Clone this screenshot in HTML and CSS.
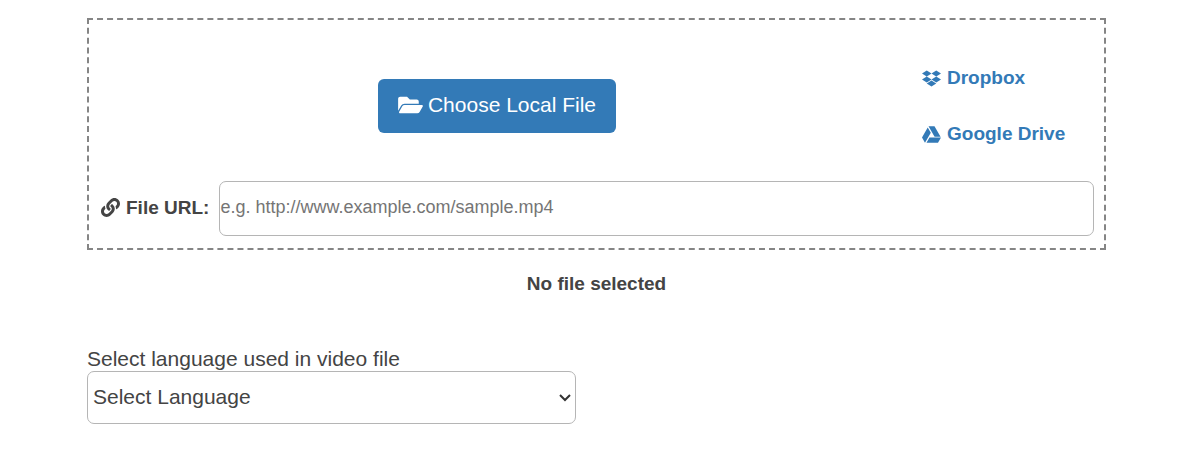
FILE: index.html
```html
<!DOCTYPE html>
<html lang="en">
  <head>
    <meta charset="UTF-8" />
    <meta name="viewport" content="width=device-width, initial-scale=1.0" />
    <title>Upload a video file</title>
    <link rel="stylesheet" href="styles.css">
  </head>

  <body>
    <main class="container">
      <div class="dropzone">
        <div class="sources">
          <button type="button" class="choose">
            <svg class="icon-folder" viewBox="0 0 576 512" aria-hidden="true"><path d="M572.694 292.093L500.27 416.248A63.997 63.997 0 0 1 444.989 448H45.025c-18.523 0-30.064-20.093-20.731-36.093l72.424-124.155A64 64 0 0 1 152 256h399.964c18.523 0 30.064 20.093 20.73 36.093zM152 224h328v-48c0-26.51-21.49-48-48-48H272l-64-64H48C21.49 64 0 85.49 0 112v278.046l69.077-118.418C86.214 242.25 117.989 224 152 224z"/></svg>
            Choose Local File
          </button>
          <div class="cloud">
            <a href="#">
              <svg class="icon" viewBox="0 0 528 512" aria-hidden="true"><path d="M264.4 116.3l-132 84.3 132 84.3-132 84.3L0 284.1l132.3-84.3L0 116.3 132.3 32l132.1 84.3zM131.6 395.7l132-84.3 132 84.3-132 84.3-132-84.3zm132.8-111.6l132-84.3-132-83.6L395.7 32 528 116.3l-132.3 84.3L528 284.8l-132.3 84.3-131.3-85z"/></svg>
              Dropbox
            </a>
            <a href="#">
              <svg class="icon" viewBox="0 0 512 512" aria-hidden="true"><path d="M339 314.9L175.4 32h161.2l163.6 282.9H339zm-137.5 23.6L120.9 480h310.5L512 338.5H201.5zM154.1 67.4L0 338.5 80.6 480 237 208.8 154.1 67.4z"/></svg>
              Google Drive
            </a>
          </div>
        </div>
        <div class="url_row">
          <label for="file_url">
            <svg class="icon" viewBox="0 0 512 512" aria-hidden="true"><path d="M326.612 185.391c59.747 59.809 58.927 155.698.36 214.59-.11.12-.24.25-.36.37l-67.2 67.2c-59.27 59.27-155.699 59.262-214.96 0-59.27-59.26-59.27-155.7 0-214.96l37.106-37.106c9.84-9.84 26.786-3.3 27.294 10.606.648 17.722 3.826 35.527 9.69 52.721 1.986 5.822.567 12.262-3.783 16.612l-13.087 13.087c-28.026 28.026-28.905 73.66-1.155 101.96 28.024 28.579 74.086 28.749 102.325.51l67.2-67.19c28.191-28.191 28.073-73.757 0-101.83-3.701-3.694-7.429-6.564-10.341-8.569a16.037 16.037 0 0 1-6.947-12.606c-.396-10.567 3.348-21.456 11.698-29.806l21.054-21.055c5.521-5.521 14.182-6.199 20.584-1.731a152.482 152.482 0 0 1 20.522 17.197zM467.547 44.449c-59.261-59.262-155.69-59.27-214.96 0l-67.2 67.2c-.12.12-.25.25-.36.37-58.566 58.892-59.387 154.781.36 214.59a152.454 152.454 0 0 0 20.521 17.196c6.402 4.468 15.064 3.789 20.584-1.731l21.054-21.055c8.35-8.35 12.094-19.239 11.698-29.806a16.037 16.037 0 0 0-6.947-12.606c-2.912-2.005-6.64-4.875-10.341-8.569-28.073-28.073-28.191-73.639 0-101.83l67.2-67.19c28.239-28.239 74.3-28.069 102.325.51 27.75 28.3 26.872 73.934-1.155 101.96l-13.087 13.087c-4.35 4.35-5.769 10.79-3.783 16.612 5.864 17.194 9.042 34.999 9.69 52.721.509 13.906 17.454 20.446 27.294 10.606l37.106-37.106c59.271-59.259 59.271-155.699.001-214.959z"/></svg>
            File URL:
          </label>
          <input type="text" id="file_url" name="file_url" placeholder="e.g. http://www.example.com/sample.mp4" />
        </div>
      </div>

      <p class="status">No file selected</p>

      <div class="language">
        <label for="language">Select language used in video file</label>
        <div class="select_wrap">
          <select id="language" name="language">
            <option>Select Language</option>
          </select>
          <svg class="chevron" viewBox="0 0 12 8" aria-hidden="true"><path d="M1 1l5 5 5-5"/></svg>
        </div>
      </div>
    </main>
  </body>
</html>
```
FILE: styles.css
```css
* {
  box-sizing: border-box;
}

body {
  margin: 0;
  background-color: #fff;
  color: #444;
  font-family: "Liberation Sans", Arial, sans-serif;
  font-size: 19px;
  line-height: 24px;
}

.container {
  padding: 18px 94px 24px 87px;
}

.dropzone {
  border: 2px dashed #858585;
  padding: 46px 10px 12px;
}

.sources {
  display: grid;
  grid-template-columns: 4fr 1fr;
  align-items: start;
}

.choose {
  display: flex;
  align-items: center;
  justify-self: center;
  gap: 5px;
  height: 54px;
  margin-top: 13px;
  padding: 0 20px 2px;
  border: 0;
  border-radius: 6px;
  background-color: #337ab7;
  color: #fff;
  font-family: inherit;
  font-size: 21px;
  cursor: pointer;
}

svg {
  fill: currentColor;
}

.icon-folder {
  width: 25px;
  height: 22px;
}

.icon {
  width: 19px;
  height: 19px;
}

.cloud {
  display: flex;
  flex-direction: column;
  gap: 32px;
  padding-left: 27px;
}

.cloud a,
.url_row label {
  display: flex;
  align-items: center;
  gap: 6px;
  font-weight: bold;
  white-space: nowrap;
}

.cloud a {
  color: #337ab7;
  text-decoration: none;
}

.url_row {
  display: flex;
  align-items: center;
  gap: 10px;
  margin-top: 35px;
  padding-left: 2px;
}

.url_row label {
  padding-bottom: 2px;
}

.url_row input {
  flex: 1;
  min-width: 0;
  height: 55px;
  padding: 0 0 2px;
  border: 1px solid #b5b5b5;
  border-radius: 7px;
  color: #444;
  font-family: inherit;
  font-size: 18px;
}

.url_row input::placeholder {
  color: #757575;
}

.status {
  margin: 22px 0 51px;
  font-weight: bold;
  text-align: center;
}

.language {
  width: 48%;
  font-size: 21px;
}

.language label {
  display: block;
}

.select_wrap {
  position: relative;
}

select {
  display: block;
  width: 100%;
  height: 53px;
  padding: 0 32px 2px 5px;
  border: 1px solid #b5b5b5;
  border-radius: 7px;
  appearance: none;
  background-color: #fff;
  color: #444;
  font-family: inherit;
  font-size: 21px;
}

.chevron {
  position: absolute;
  top: 23px;
  right: 5px;
  width: 12px;
  height: 8px;
  fill: none;
  stroke: #333;
  stroke-width: 2;
  pointer-events: none;
}
```
